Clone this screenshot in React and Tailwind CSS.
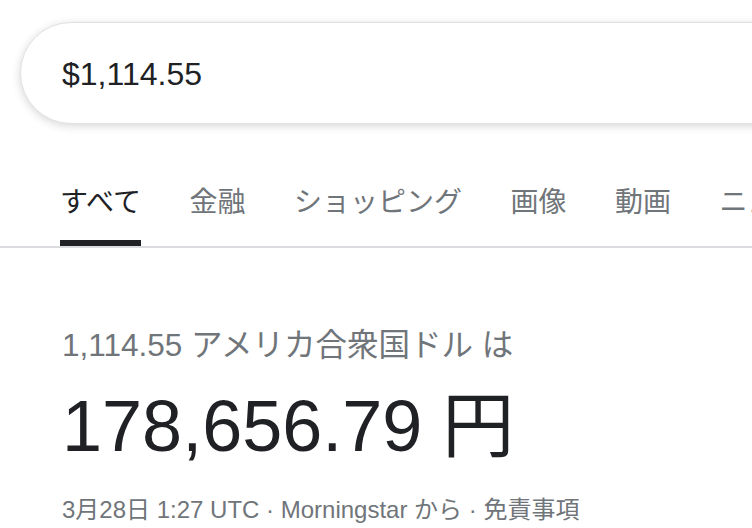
export default function App() {
  const tabs = ['すべて', '金融', 'ショッピング', '画像', '動画', 'ニュース'];
  return (
    <div
      className="w-[752px] h-[528px] overflow-hidden bg-white text-[#202124]"
      style={{ fontFamily: '"Liberation Sans", Arial, "Noto Sans CJK JP", sans-serif' }}
    >
      {/* Search box */}
      <div className="pt-[22px] pl-[20px]">
        <div className="h-[102px] w-[800px] rounded-full border border-[#dfe1e5] bg-white shadow-[0_2px_8px_rgba(32,33,36,0.18)] flex items-center pl-[41px]">
          <span className="text-[32px] mt-[2px] text-[#202124]">$1,114.55</span>
        </div>
      </div>

      {/* Tabs */}
      <div className="mt-[40px] border-b-2 border-[#dadce0]">
        <div className="flex gap-[48.5px] pl-[60px] whitespace-nowrap">
          {tabs.map((t, i) => (
            <div key={t} className="flex flex-col">
              <span
                className={
                  'text-[28px] leading-[38px] pt-[20px] pb-[18px] ' +
                  (i === 0 ? 'text-[#202124]' : 'text-[#70757a]')
                }
              >
                {t}
              </span>
              <div className={i === 0 ? 'h-[6px] bg-[#202124]' : 'h-[6px]'} />
            </div>
          ))}
        </div>
      </div>

      {/* Conversion result */}
      <div className="pl-[62px] pt-[77px]">
        <div className="text-[31.5px] leading-[40px] text-[#70757a]">1,114.55 アメリカ合衆国ドル は</div>
        <div className="text-[72px] leading-[84px] mt-[19px] text-[#202124]">178,656.79 円</div>
        <div className="text-[24px] leading-[30px] mt-[27px] text-[#70757a]">
          3月28日 1:27 UTC · Morningstar から · 免責事項
        </div>
      </div>
    </div>
  );
}
